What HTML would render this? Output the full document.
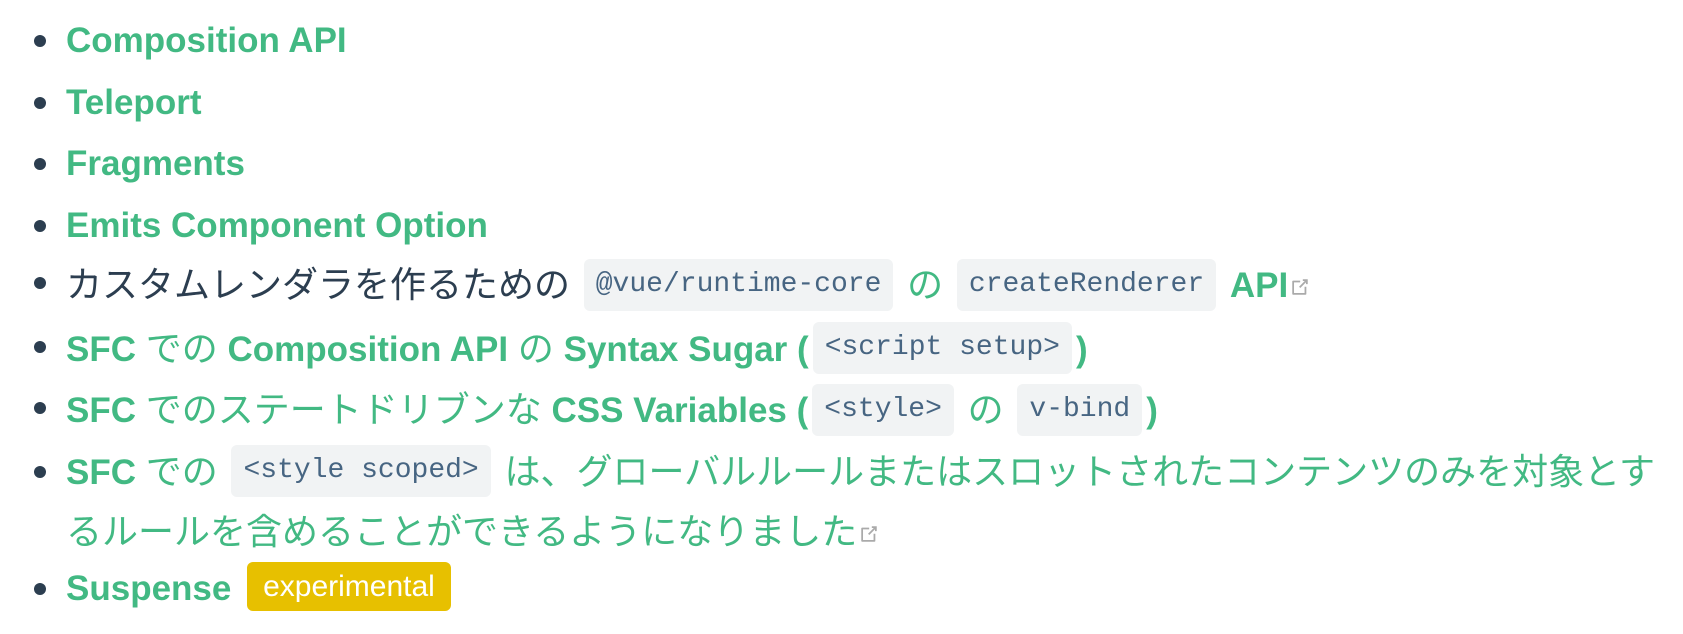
<!DOCTYPE html>
<html><head><meta charset="utf-8"><style>
html,body{margin:0;padding:0;background:#fff;width:1683px;height:634px;overflow:hidden}
ul{margin:0;padding:10px 0 0 66px;list-style:none;font-family:"Liberation Sans","Noto Sans CJK JP",sans-serif;font-size:35px;color:#2c3e50}
li{position:relative;line-height:61.5px;height:61.5px;white-space:nowrap}
li::before{content:"";position:absolute;left:-32px;top:25px;width:12px;height:12px;border-radius:50%;background:#2c3e50}
a{color:#42b983;text-decoration:none}
b{font-weight:bold}
.j{font-family:"Noto Sans CJK JP",sans-serif;font-weight:400;font-size:36px}
code{display:inline-block;font-family:"Liberation Mono","DejaVu Sans Mono",monospace;font-size:28px;line-height:52px;color:#476582;background:#f1f3f4;border-radius:6px;padding:0 12px;margin:0 4px;vertical-align:middle;position:relative;top:-3px}
.badge{display:inline-block;background:#e7c000;color:#fff;font-size:30px;line-height:49px;padding:0 16px;border-radius:6px;vertical-align:middle;position:relative;top:-4px;margin-left:6px}
svg.ext{width:22px;height:22px;vertical-align:-1px;margin-left:1px}
</style></head><body>
<ul>
<li><a><b>Composition API</b></a></li>
<li><a><b>Teleport</b></a></li>
<li><a><b>Fragments</b></a></li>
<li><a><b>Emits Component Option</b></a></li>
<li style="top:-4px"><span class="j">カスタムレンダラを作るための</span> <code>@vue/runtime-core</code> <a><span class="j">の</span></a> <code>createRenderer</code> <a><b>API</b><svg class="ext" viewBox="0 0 100 100"><path fill="#aaa" d="M18.8,85.1h56l0,0c2.2,0,4-1.8,4-4v-32h-8v28h-48v-48h28v-8h-32l0,0c-2.2,0-4,1.8-4,4v56C14.8,83.3,16.6,85.1,18.8,85.1z"/><polygon fill="#aaa" points="45.7,48.7 51.3,54.3 77.2,28.5 77.2,37.2 85.2,37.2 85.2,14.9 62.8,14.9 62.8,22.9 71.5,22.9"/></svg></a></li>
<li style="top:-2px"><a><b>SFC</b> <span class="j">での</span> <b>Composition API</b> <span class="j">の</span> <b>Syntax Sugar (</b></a><code>&lt;script setup&gt;</code><a><b>)</b></a></li>
<li style="top:-2px"><a><b>SFC</b> <span class="j">でのステートドリブンな</span> <b>CSS Variables (</b></a><code>&lt;style&gt;</code> <a><span class="j">の</span></a> <code>v-bind</code><a><b>)</b></a></li>
<li style="height:122px;line-height:56px;top:0px"><a><b>SFC</b> <span class="j">での</span></a> <code>&lt;style scoped&gt;</code> <a><span class="j">は、グローバルルールまたはスロットされたコンテンツのみを対象とす<br>るルールを含めることができるようになりました</span><svg class="ext" viewBox="0 0 100 100"><path fill="#aaa" d="M18.8,85.1h56l0,0c2.2,0,4-1.8,4-4v-32h-8v28h-48v-48h28v-8h-32l0,0c-2.2,0-4,1.8-4,4v56C14.8,83.3,16.6,85.1,18.8,85.1z"/><polygon fill="#aaa" points="45.7,48.7 51.3,54.3 77.2,28.5 77.2,37.2 85.2,37.2 85.2,14.9 62.8,14.9 62.8,22.9 71.5,22.9"/></svg></a></li>
<li style="top:-5px"><a><b>Suspense</b></a> <span class="badge">experimental</span></li>
</ul>
</body></html>
